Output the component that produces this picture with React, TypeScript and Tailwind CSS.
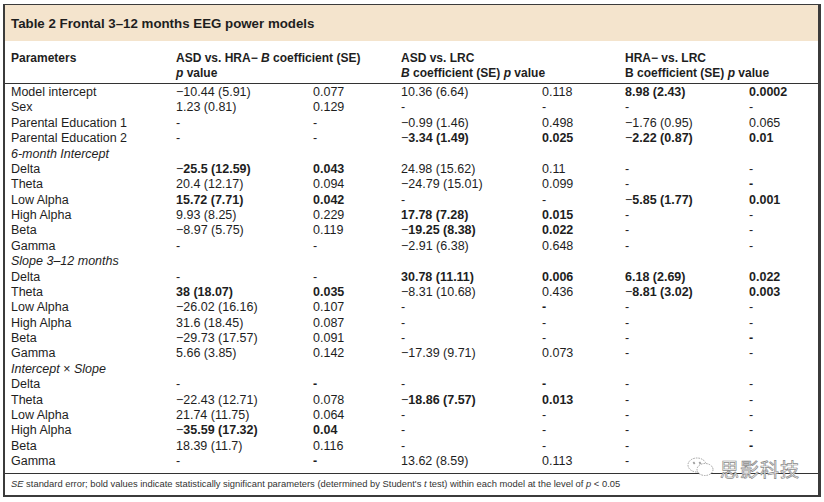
import React from "react";

type Cell = string | { t: string; b?: boolean };

const B = (t: string): Cell => ({ t, b: true });

type Row =
  | { kind: "section"; label: string }
  | { kind: "data"; label: string; cells: Cell[] };

const rows: Row[] = [
  { kind: "data", label: "Model intercept", cells: ["−10.44 (5.91)", "0.077", "10.36 (6.64)", "0.118", B("8.98 (2.43)"), B("0.0002")] },
  { kind: "data", label: "Sex", cells: ["1.23 (0.81)", "0.129", "-", "-", "-", "-"] },
  { kind: "data", label: "Parental Education 1", cells: ["-", "-", "−0.99 (1.46)", "0.498", "−1.76 (0.95)", "0.065"] },
  { kind: "data", label: "Parental Education 2", cells: ["-", "-", B("−3.34 (1.49)"), B("0.025"), B("−2.22 (0.87)"), B("0.01")] },
  { kind: "section", label: "6-month Intercept" },
  { kind: "data", label: "Delta", cells: [B("−25.5 (12.59)"), B("0.043"), "24.98 (15.62)", "0.11", "-", "-"] },
  { kind: "data", label: "Theta", cells: ["20.4 (12.17)", "0.094", "−24.79 (15.01)", "0.099", "-", B("-")] },
  { kind: "data", label: "Low Alpha", cells: [B("15.72 (7.71)"), B("0.042"), "-", "-", B("−5.85 (1.77)"), B("0.001")] },
  { kind: "data", label: "High Alpha", cells: ["9.93 (8.25)", "0.229", B("17.78 (7.28)"), B("0.015"), "-", "-"] },
  { kind: "data", label: "Beta", cells: ["−8.97 (5.75)", "0.119", B("−19.25 (8.38)"), B("0.022"), "-", "-"] },
  { kind: "data", label: "Gamma", cells: ["-", "-", "−2.91 (6.38)", "0.648", "-", "-"] },
  { kind: "section", label: "Slope 3–12 months" },
  { kind: "data", label: "Delta", cells: ["-", "-", B("30.78 (11.11)"), B("0.006"), B("6.18 (2.69)"), B("0.022")] },
  { kind: "data", label: "Theta", cells: [B("38 (18.07)"), B("0.035"), "−8.31 (10.68)", "0.436", B("−8.81 (3.02)"), B("0.003")] },
  { kind: "data", label: "Low Alpha", cells: ["−26.02 (16.16)", "0.107", "-", B("-"), "-", "-"] },
  { kind: "data", label: "High Alpha", cells: ["31.6 (18.45)", "0.087", "-", "-", "-", "-"] },
  { kind: "data", label: "Beta", cells: ["−29.73 (17.57)", "0.091", "-", "-", "-", B("-")] },
  { kind: "data", label: "Gamma", cells: ["5.66 (3.85)", "0.142", "−17.39 (9.71)", "0.073", "-", "-"] },
  { kind: "section", label: "Intercept × Slope" },
  { kind: "data", label: "Delta", cells: ["-", B("-"), "-", B("-"), "-", "-"] },
  { kind: "data", label: "Theta", cells: ["−22.43 (12.71)", "0.078", B("−18.86 (7.57)"), B("0.013"), "-", "-"] },
  { kind: "data", label: "Low Alpha", cells: ["21.74 (11.75)", "0.064", "-", "-", "-", "-"] },
  { kind: "data", label: "High Alpha", cells: [B("−35.59 (17.32)"), B("0.04"), "-", "-", "-", "-"] },
  { kind: "data", label: "Beta", cells: ["18.39 (11.7)", "0.116", "-", "-", "-", B("-")] },
  // last p value sits under the watermark
  { kind: "data", label: "Gamma", cells: ["-", B("-"), "13.62 (8.59)", "0.113", "-", ""] },
];

const grid = "grid grid-cols-[165px_137px_88px_141px_83px_124px_1fr]";

function Value({ c }: { c: Cell }) {
  if (typeof c === "string") return <span>{c}</span>;
  // the leading minus stays light in the source
  if (c.t.startsWith("−")) {
    return (
      <span>
        −<span className="font-bold">{c.t.slice(1)}</span>
      </span>
    );
  }
  return <span className="font-bold">{c.t}</span>;
}

function WeChat() {
  return (
    <svg width="30" height="22" viewBox="0 0 30 22" fill="none" stroke="#9a9a9a" strokeWidth="0.9" strokeDasharray="1.6 1">
      <ellipse cx="11" cy="9" rx="9" ry="7" fill="#fff" />
      <ellipse cx="19" cy="13.5" rx="8" ry="6" fill="#fff" />
      <circle cx="8" cy="7" r="0.9" fill="#9a9a9a" />
      <circle cx="14" cy="7" r="0.9" fill="#9a9a9a" />
    </svg>
  );
}

export default function App() {
  return (
    <div className="w-[824px] h-[502px] bg-white pt-[4px] pl-[3px] font-['Liberation_Sans',Arial,sans-serif] text-[#1e1e1e]">
      <div className="relative w-[818px] h-[493px] border-l-2 border-t border-b-2 border-r-[3px] border-[#3b3b3b] flex flex-col">
        <div className="h-[36px] bg-[#f4e4cd] flex items-center pl-[6px] pt-[1px]">
          <span className="font-bold text-[13.3px]">Table 2 Frontal 3–12 months EEG power models</span>
        </div>

        <div className={`${grid} pl-[6px] pt-[10px] pb-[2px] border-b border-[#333] text-[12px] leading-[15px] font-bold`}>
          <div>Parameters</div>
          <div className="col-span-2">
            ASD vs. HRA− <i>B</i> coefficient (SE)
            <br />
            <i>p</i> value
          </div>
          <div className="col-span-2">
            ASD vs. LRC
            <br />
            <i>B</i> coefficient (SE) <i>p</i> value
          </div>
          <div className="col-span-2">
            HRA− vs. LRC
            <br />
            B coefficient (SE) <i>p</i> value
          </div>
        </div>

        <div className="pt-[1px] pl-[6px] text-[12.5px]">
          {rows.map((r, i) =>
            r.kind === "section" ? (
              <div key={i} className="h-[15.375px] leading-[15.375px] italic">
                {r.label}
              </div>
            ) : (
              <div key={i} className={`${grid} h-[15.375px] leading-[15.375px]`}>
                <div>{r.label}</div>
                {r.cells.map((c, j) => (
                  <div key={j}>
                    <Value c={c} />
                  </div>
                ))}
              </div>
            )
          )}
        </div>

        <div className="mt-auto border-t border-[#333] h-[22px] flex items-center pl-[6px] text-[9.4px] text-[#333]">
          <span>
            <i>SE</i> standard error; bold values indicate statistically significant parameters (determined by Student's <i>t</i> test)
            within each model at the level of <i>p</i> &lt; 0.05
          </span>
        </div>

        <div className="absolute left-[681px] top-[451px] flex items-end gap-[4px]">
          <WeChat />
          <span className="text-[19px] leading-[19px] text-white font-['Noto_Sans_CJK_SC',sans-serif] [-webkit-text-stroke:0.7px_#8a8a8a] tracking-[1px]">
            思影科技
          </span>
        </div>
      </div>
    </div>
  );
}
